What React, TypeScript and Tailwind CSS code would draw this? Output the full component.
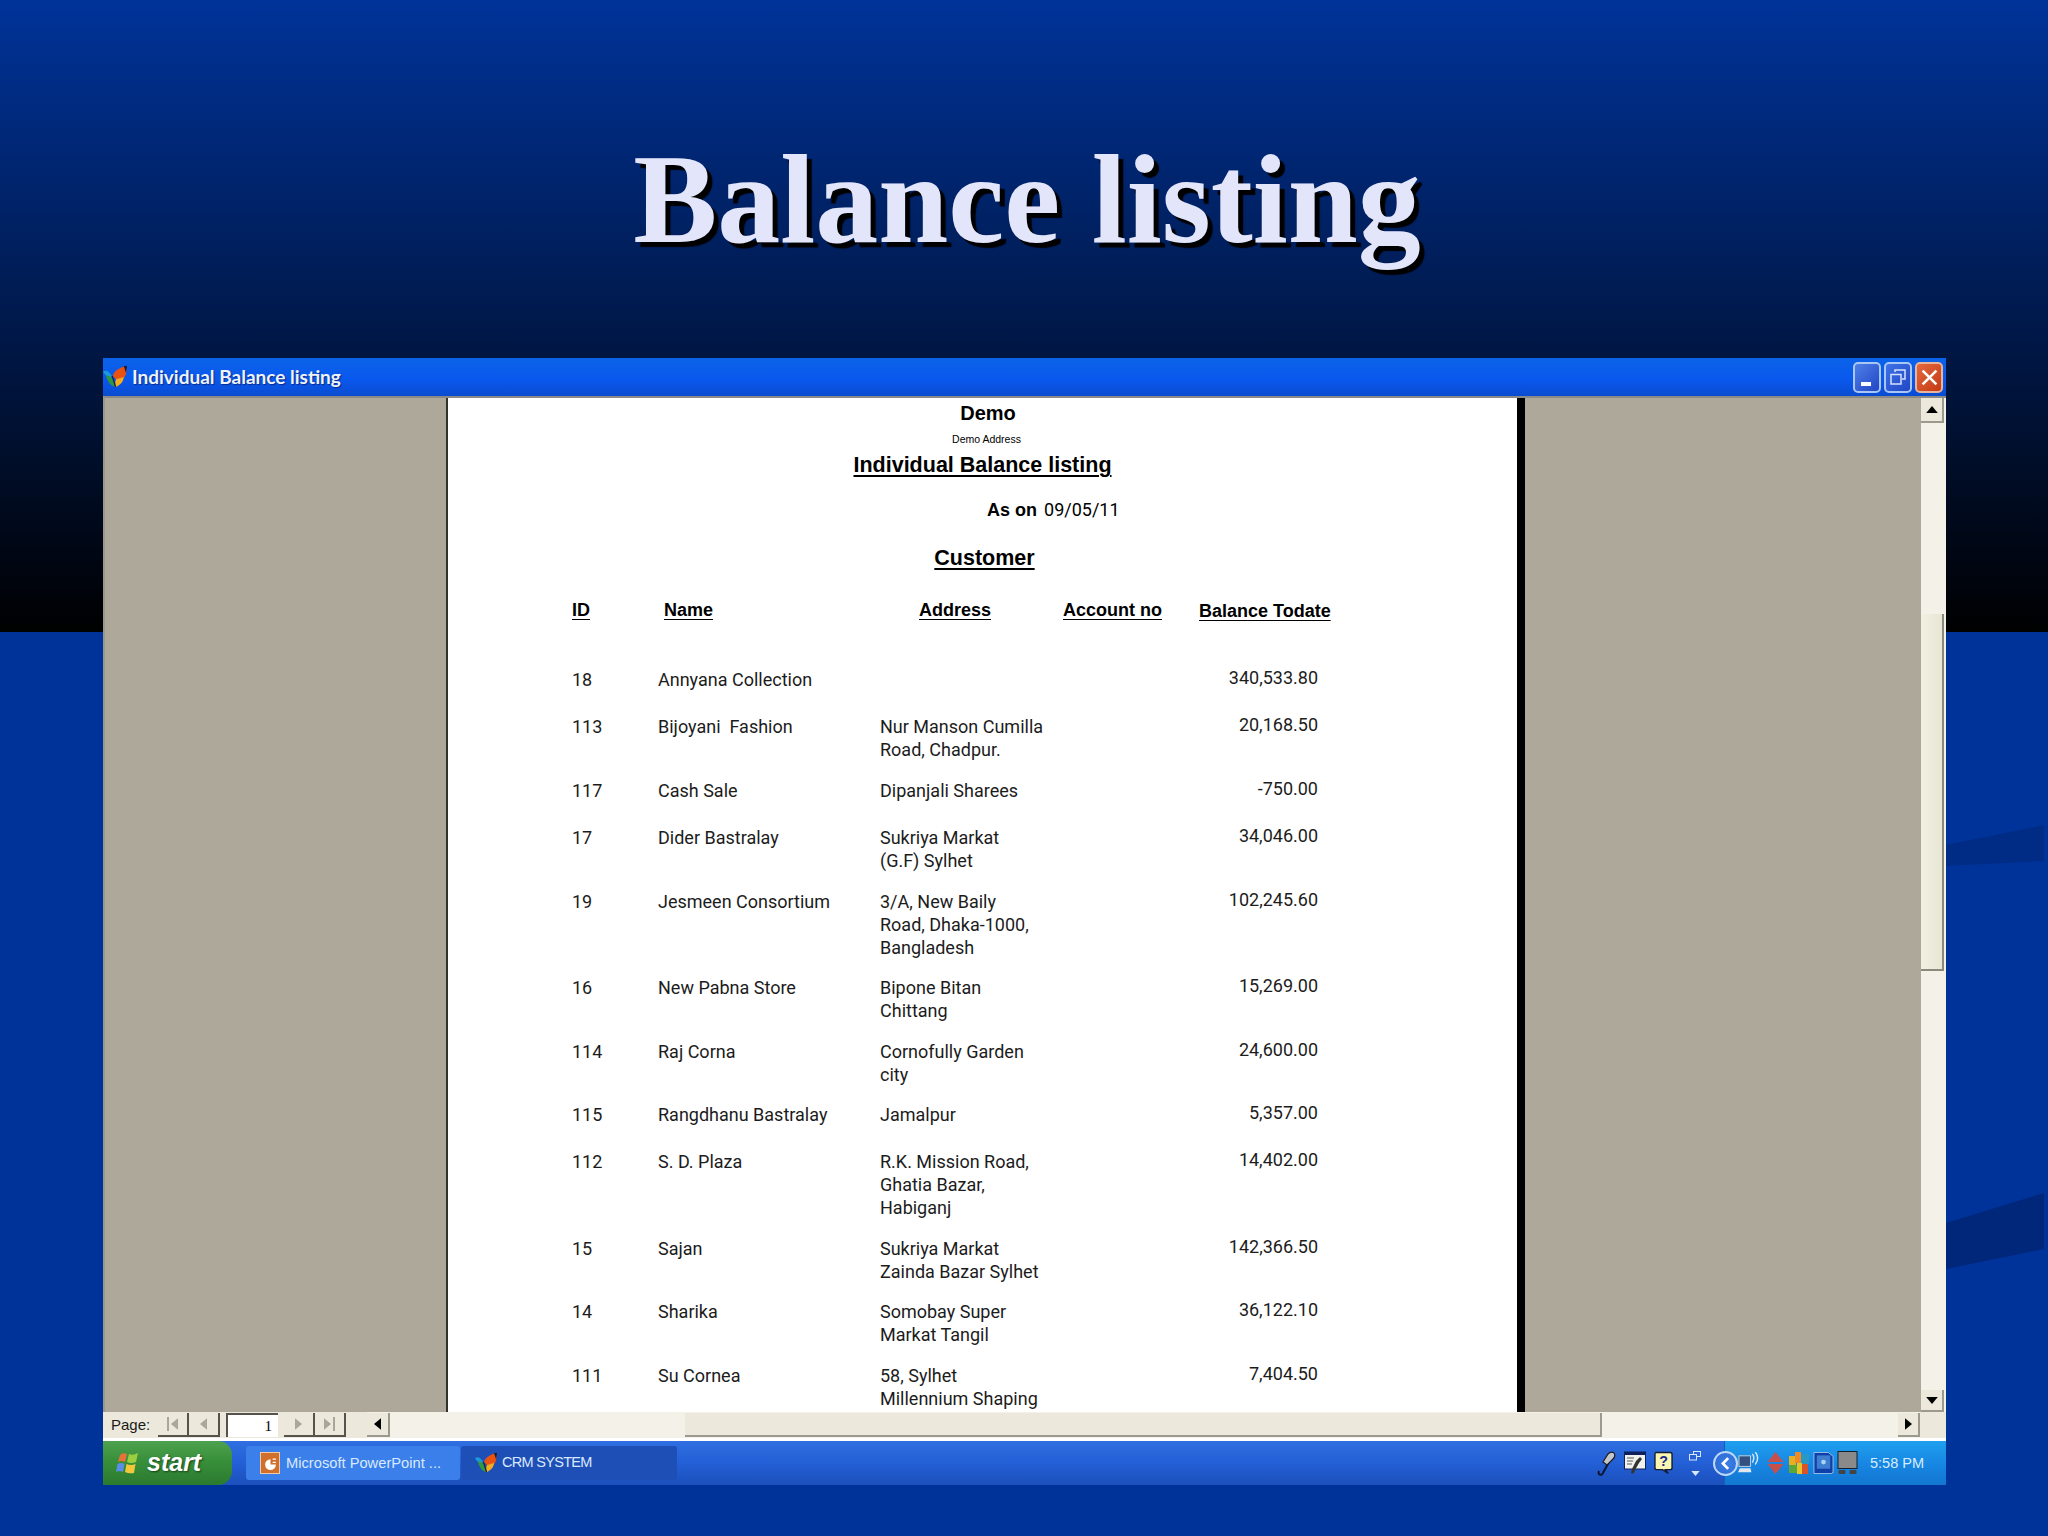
import React from "react";

function Butterfly({ className }: { className: string }) {
  return (
    <svg viewBox="0 0 22 20" className={className}>
      <path d="M0 5 C3 3 6 5 8 9 L6 11 C4 9 1 8 0 5Z" fill="#1a9ad8" />
      <path d="M3 9 C6 8 8 10 9 13 L11 19 C7 18 4 14 3 9Z" fill="#2f9a3a" />
      <path d="M9 9 C10 5 14 2 21 0 C22 5 21 9 19 11 L12 12Z" fill="#ea5212" />
      <path d="M12 12 L19 10 C19 14 16 17 12 19 C11 16 11 14 12 12Z" fill="#f6ad1c" />
      <path d="M9 9 L12 19 L11 19 L8 9Z M19 0 L22 0 L21 6Z" fill="#1a1a2a" />
    </svg>
  );
}

function WinFlag() {
  return (
    <svg viewBox="0 0 24 26" className="w-[24px] h-[26px]">
      <path d="M5 5 Q8 2 12 4 L10 12 Q6 10 3 12Z" fill="#e8713a" />
      <path d="M14 4 Q18 6 23 3 L21 12 Q16 14 12 12Z" fill="#9ccf3f" />
      <path d="M2.5 14 Q6 12 9.500 14 L8 22 Q4 20 1 22Z" fill="#5a8ee8" />
      <path d="M11.500 14 Q16 16 20.500 14 L19 23 Q14 24 10 22Z" fill="#f2c83a" />
    </svg>
  );
}

function Arrow({ dir, color = "#000" }: { dir: "up" | "down" | "left" | "right"; color?: string }) {
  const d = {
    up: "M0 6 L5 0 L10 6Z",
    down: "M0 0 L10 0 L5 6Z",
    left: "M6 0 L6 10 L0 5Z",
    right: "M0 0 L6 5 L0 10Z",
  }[dir];
  const vertical = dir === "up" || dir === "down";
  return (
    <svg viewBox={vertical ? "0 0 10 6" : "0 0 6 10"} className={vertical ? "w-[12px] h-[7px]" : "w-[7px] h-[12px]"}>
      <path d={d} fill={color} />
    </svg>
  );
}

function NavButton({ dir, bar }: { dir: "left" | "right"; bar?: boolean }) {
  return (
    <div className="w-[31px] h-[24px] flex items-center justify-center gap-[2px] border-r-2 border-b-2 border-[#55534c]">
      {bar && dir === "left" && <div className="w-[2px] h-[14px] bg-[#a9a79b]" />}
      <Arrow dir={dir} color="#a9a79b" />
      {bar && dir === "right" && <div className="w-[2px] h-[14px] bg-[#a9a79b]" />}
    </div>
  );
}

function ScrollBtn({ children, className = "" }: { children: React.ReactNode; className?: string }) {
  return (
    <div className={`flex items-center justify-center bg-[#ece9dc] border-r-2 border-b-2 border-[#9c9a8e] ${className}`}>
      {children}
    </div>
  );
}

const rows: { id: string; name: string; addr: string[]; bal: string; h: string }[] = [
  { id: "18", name: "Annyana Collection", addr: [], bal: "340,533.80", h: "h-[47px]" },
  { id: "113", name: "Bijoyani  Fashion", addr: ["Nur Manson Cumilla", "Road, Chadpur."], bal: "20,168.50", h: "h-[64px]" },
  { id: "117", name: "Cash Sale", addr: ["Dipanjali Sharees"], bal: "-750.00", h: "h-[47px]" },
  { id: "17", name: "Dider Bastralay", addr: ["Sukriya Markat", "(G.F) Sylhet"], bal: "34,046.00", h: "h-[64px]" },
  { id: "19", name: "Jesmeen Consortium", addr: ["3/A, New Baily", "Road, Dhaka-1000,", "Bangladesh"], bal: "102,245.60", h: "h-[86px]" },
  { id: "16", name: "New Pabna Store", addr: ["Bipone Bitan", "Chittang"], bal: "15,269.00", h: "h-[64px]" },
  { id: "114", name: "Raj Corna", addr: ["Cornofully Garden", "city"], bal: "24,600.00", h: "h-[63px]" },
  { id: "115", name: "Rangdhanu Bastralay", addr: ["Jamalpur"], bal: "5,357.00", h: "h-[47px]" },
  { id: "112", name: "S. D. Plaza", addr: ["R.K. Mission Road,", "Ghatia Bazar,", "Habiganj"], bal: "14,402.00", h: "h-[87px]" },
  { id: "15", name: "Sajan", addr: ["Sukriya Markat", "Zainda Bazar Sylhet"], bal: "142,366.50", h: "h-[63px]" },
  { id: "14", name: "Sharika", addr: ["Somobay Super", "Markat Tangil"], bal: "36,122.10", h: "h-[64px]" },
  { id: "111", name: "Su Cornea", addr: ["58, Sylhet", "Millennium Shaping"], bal: "7,404.50", h: "h-[64px]" },
];

function Report() {
  return (
    <div className="w-[1079px] shrink-0 flex border-l-2 border-[#33312c] h-full">
      <div className="w-[1069px] bg-white text-black overflow-hidden font-['Liberation_Sans',Arial,sans-serif]">
        <div className="relative pt-[3px]">
          <div className="h-[24px] leading-[24px] text-[20px] font-bold text-center pl-[11px]">Demo</div>
          <div className="mt-[7px] h-[14px] leading-[14px] text-[10.5px] text-center pl-[8px]">Demo Address</div>
          <div className="mt-[5px] h-[28px] leading-[28px] text-center">
            <span className="text-[21.500px] font-semibold underline decoration-2 underline-offset-[3px]">Individual Balance listing</span>
          </div>
          <div className="mt-[20px] h-[22px] leading-[22px] text-[18px] pl-[539px]">
            <b>As on</b> <span className="ml-[2px] font-['Roboto',sans-serif]">09/05/11</span>
          </div>
          <div className="mt-[23px] h-[28px] leading-[28px] text-center pl-[4px]">
            <span className="text-[21.500px] font-semibold underline decoration-2 underline-offset-[3px]">Customer</span>
          </div>
          <div className="mt-[27px] h-[22px] leading-[22px] text-[18px] font-bold underline underline-offset-[3px] grid grid-cols-[93px_254px_145px_135px_1fr] pl-[124px]">
            <div>ID</div>
            <div className="ml-[-1px]">Name</div>
            <div>Address</div>
            <div className="ml-[-1px]">Account no</div>
            <div className="mt-[1px] whitespace-nowrap">Balance Todate</div>
          </div>
          <div className="mt-[47px] text-[18px] leading-[23px] text-[#1c1c1c] font-['Roboto',sans-serif]">
            {rows.map((r) => (
              <div key={r.id} className={`grid grid-cols-[86px_222px_438px] pl-[124px] ${r.h}`}>
                <div>{r.id}</div>
                <div className="whitespace-pre">{r.name}</div>
                <div className="relative">
                  {r.addr.map((a) => (
                    <div key={a} className="whitespace-nowrap">{a}</div>
                  ))}
                  <div className="absolute right-0 top-[-2px]">{r.bal}</div>
                </div>
              </div>
            ))}
          </div>
        </div>
      </div>
      <div className="w-[8px] bg-black" />
    </div>
  );
}

function Tray() {
  return (
    <div className="flex items-center h-full">
      <div className="flex items-center gap-[8px] pr-[23px]">
        {/* microphone */}
        <svg viewBox="0 0 20 26" className="w-[20px] h-[26px]">
          <path d="M3 21 C1 25 6 26 7 23 L13 12" stroke="#0d1730" strokeWidth="2" fill="none" />
          <path d="M7 12 L12 4 Q15 1 18 3 Q20 6 17 9 L11 15Z" fill="#c3c7c9" stroke="#1d1d24" strokeWidth="1.200" />
        </svg>
        {/* dictation window */}
        <svg viewBox="0 0 22 24" className="w-[22px] h-[24px]">
          <rect x="0.500" y="1" width="21" height="17" fill="#f1f2ee" stroke="#10205c" />
          <rect x="0.500" y="1" width="21" height="3" fill="#10205c" />
          <path d="M3 7H10M3 10H9M3 13H8" stroke="#5a5a5a" />
          <path d="M7 22 Q10 24 11 19 L15 12 L18 8 L16 6 L12 10 L8 18Z" fill="#333" />
        </svg>
        {/* help */}
        <svg viewBox="0 0 20 24" className="w-[19px] h-[24px]">
          <path d="M2 1 H17 Q19 1 19 3 V17 Q19 19 17 19 H12 L15 23 L9 19 H3 Q1 19 1 17 V3 Q1 1 2 1Z" fill="#fbf5b2" stroke="#141c33" strokeWidth="1.500" />
          <text x="10" y="15" textAnchor="middle" fontSize="15" fontWeight="700" fill="#1a2a8a" fontFamily="Liberation Sans">?</text>
        </svg>
        <div className="flex flex-col items-center gap-[10px] ml-[8px] w-[12px]">
          <svg viewBox="0 0 12 10" className="w-[12px] h-[10px]">
            <rect x="4.500" y="0.500" width="7" height="5" fill="none" stroke="#d7e6fb" />
            <rect x="0.500" y="3.500" width="7" height="5.500" fill="#2a62d6" stroke="#d7e6fb" />
          </svg>
          <svg viewBox="0 0 10 6" className="w-[9px] h-[5px]"><path d="M0 0 L10 0 L5 6Z" fill="#d7e6fb" /></svg>
        </div>
      </div>
      <div className="relative h-full w-[222px] bg-[linear-gradient(#1fa0ee,#1785e2_55%,#1277d0)] border-l border-[#0f62ad] flex items-center pl-[13px]">
        <div className="absolute left-[-12px] top-[10px] w-[25px] h-[25px] rounded-full bg-[radial-gradient(circle_at_60%_50%,#3a80e4,#2a66d6)] border-2 border-[#bcd8f6] flex items-center justify-center">
          <svg viewBox="0 0 10 14" className="w-[9px] h-[13px]">
            <path d="M8 1 L2 7 L8 13" stroke="#fff" strokeWidth="3" fill="none" />
          </svg>
        </div>
        {/* network */}
        <svg viewBox="0 0 24 24" className="w-[23px] h-[23px] shrink-0">
          <rect x="1" y="4" width="12" height="11" fill="#33507e" stroke="#c3d3e6" />
          <path d="M0 21 H14 L13 17 H2Z" fill="#dfe6ee" />
          <path d="M15 2 Q18 6 15 11 M18 0 Q23 6 18 13" stroke="#cfe7fb" strokeWidth="1.500" fill="none" />
        </svg>
        {/* red arrows */}
        <svg viewBox="0 0 16 22" className="w-[19px] h-[22px] ml-[5px] shrink-0">
          <path d="M8 0 L16 10 H0Z" fill="#c8504a" />
          <path d="M0 12 H16 L8 22Z" fill="#c8504a" />
        </svg>
        {/* avg */}
        <svg viewBox="0 0 20 22" className="w-[20px] h-[22px] ml-[4px] shrink-0">
          <rect x="0" y="4" width="7" height="9" fill="#e6b020" />
          <rect x="6" y="0" width="6" height="11" fill="#f08a24" />
          <rect x="12" y="2" width="8" height="10" fill="#2a98c4" />
          <rect x="0" y="13" width="8" height="8" fill="#5da63a" />
          <rect x="8" y="11" width="5" height="11" fill="#e8c62a" />
          <rect x="13" y="12" width="6" height="10" fill="#d8532a" />
        </svg>
        {/* blue box */}
        <svg viewBox="0 0 22 22" className="w-[21px] h-[22px] ml-[4px] shrink-0">
          <path d="M1 0 H16 L21 4 V20 Q21 22 19 22 H1Z" fill="#0f3fa8" stroke="#b9d6f2" strokeWidth="0.800" />
          <rect x="4" y="3" width="14" height="14" fill="#3d7ed0" />
          <circle cx="11" cy="10" r="2.500" fill="#a9d2f4" />
        </svg>
        {/* gray screen */}
        <svg viewBox="0 0 20 24" className="w-[21px] h-[24px] ml-[3px] shrink-0">
          <rect x="0.500" y="0.500" width="19" height="17" fill="#8a8a8a" stroke="#123" />
          <rect x="1" y="19" width="7" height="4" rx="1" fill="#444" />
          <rect x="12" y="19" width="7" height="4" rx="1" fill="#444" />
        </svg>
        <div className="ml-[12px] text-[14.500px] leading-none text-[#d7edfd] font-['Liberation_Sans',Arial,sans-serif] whitespace-nowrap">5:58 PM</div>
      </div>
    </div>
  );
}

export default function App() {
  return (
    <div className="relative w-[2048px] h-[1536px] overflow-hidden bg-[linear-gradient(#003399_0px,#000000_632px,#003399_632px,#003399_1536px)]">
      {/* decorative stripes of the slide background */}
      <svg className="absolute right-0 top-0 w-[2048px] h-[1536px]" viewBox="0 0 2048 1536">
        <path d="M1946 845 L2044 825 V861 L1946 866Z" fill="#002c85" />
        <path d="M1946 1223 L2044 1193 V1249 L1946 1269Z" fill="#002779" />
      </svg>

      <div className="relative flex flex-col">
        <div className="h-[358px] flex justify-center pt-[138px]">
          <h1 className="h-[124px] leading-[124px] ml-[6px] text-[126px] font-bold text-[#e3e6fb] font-['Liberation_Serif','Times_New_Roman',serif] [text-shadow:5px_5px_1px_#000] whitespace-nowrap">
            Balance listing
          </h1>
        </div>

        <div className="ml-[103px] w-[1843px] flex flex-col">
          {/* title bar */}
          <div className="h-[38px] flex items-center justify-between pr-[3px] bg-[linear-gradient(#0b63e8,#0a58ee_55%,#0a4cd0)]">
            <div className="flex items-center">
              <Butterfly className="w-[24px] h-[22px]" />
              <span className="ml-[5px] text-[19px] font-bold text-[#eef3fb] font-['Lato',sans-serif] [text-shadow:1px_1px_1px_#0a2a8a] whitespace-nowrap">
                Individual Balance listing
              </span>
            </div>
            <div className="flex gap-[3px] items-center">
              <div className="w-[28px] h-[31px] rounded-[5px] border-2 border-[#a9c6f4] bg-[linear-gradient(135deg,#4f7fe8,#2146c4)] flex items-end pb-[5px] pl-[6px]">
                <div className="w-[10px] h-[4px] bg-white" />
              </div>
              <div className="w-[28px] h-[31px] rounded-[5px] border-2 border-[#a9c6f4] bg-[linear-gradient(135deg,#3f72e6,#2146c4)] flex items-center justify-center">
                <svg viewBox="0 0 16 16" className="w-[16px] h-[16px]">
                  <path d="M5 3 V1 H15 V10 H12" stroke="#d5e2fa" strokeWidth="1.500" fill="none" />
                  <rect x="1" y="5.500" width="10" height="9.500" stroke="#d5e2fa" strokeWidth="1.500" fill="none" />
                </svg>
              </div>
              <div className="w-[28px] h-[31px] rounded-[5px] border-2 border-[#e8b49c] bg-[linear-gradient(135deg,#e4683f,#c53a12)] flex items-center justify-center">
                <svg viewBox="0 0 16 16" className="w-[17px] h-[17px]">
                  <path d="M1.500 1.500 L14.500 14.500 M14.500 1.500 L1.500 14.500" stroke="#fff" strokeWidth="2.400" />
                </svg>
              </div>
            </div>
          </div>

          {/* client area */}
          <div className="h-[1016px] border-t-2 border-[#8b8a86] border-l-2 border-l-[#9a988c] bg-[#aea89a] flex overflow-hidden">
            <div className="w-[341px] shrink-0" />
            <Report />
            <div className="flex-1" />
            <div className="w-[25px] shrink-0 bg-[#f3f1e8] flex flex-col pr-[2px]">
              <ScrollBtn className="h-[25px]"><Arrow dir="up" /></ScrollBtn>
              <div className="h-[191px]" />
              <div className="h-[357px] bg-[linear-gradient(90deg,#f2f0e2,#e8e6d4)] border-r-2 border-b-2 border-[#8b897d]" />
              <div className="flex-1" />
              <ScrollBtn className="h-[22px]"><Arrow dir="down" /></ScrollBtn>
            </div>
          </div>

          {/* bottom toolbar and horizontal bar */}
          <div className="h-[29px] bg-[#f3f1e8] flex items-center border-b-[3px] border-white">
            <div className="h-full flex items-center bg-[#ece9dc] pl-[8px] pr-[21px]">
              <span className="w-[47px] text-[15px] text-[#1a1a1a] font-['Liberation_Sans',Arial,sans-serif]">Page:</span>
              <NavButton dir="left" bar />
              <NavButton dir="left" />
              <div className="ml-[6px] mr-[6px] w-[52px] h-[24px] bg-white border-l-2 border-t-2 border-[#55534c] text-right pr-[6px] text-[15px] leading-[23px] text-black font-['Liberation_Serif',serif]">1</div>
              <NavButton dir="right" />
              <NavButton dir="right" bar />
            </div>
            <ScrollBtn className="w-[23px] h-[24px]"><Arrow dir="left" /></ScrollBtn>
            <div className="w-[295px]" />
            <div className="w-[917px] h-[24px] bg-[#ece9dc] border-r-2 border-b-2 border-[#9c9a8e]" />
            <div className="flex-1" />
            <ScrollBtn className="w-[22px] h-[24px]"><Arrow dir="right" /></ScrollBtn>
            <div className="w-[26px] h-full bg-[#ece9dc]" />
          </div>

          {/* taskbar */}
          <div className="h-[44px] flex items-center justify-between bg-[linear-gradient(#2f6fe0,#235fd6_50%,#1c50bc)]">
            <div className="flex items-center h-full">
              <div className="w-[129px] h-full flex items-center pl-[12px] gap-[8px] rounded-r-[14px] bg-[linear-gradient(#4ea24f,#388f3a_45%,#2b7a2e)]">
                <WinFlag />
                <span className="text-[25px] font-bold italic text-white font-['Liberation_Sans',Arial,sans-serif] [text-shadow:1px_1px_2px_#14401a]">start</span>
              </div>
              <div className="ml-[14px] w-[214px] h-[34px] rounded-[3px] bg-[#3a7fea] flex items-center pl-[14px] gap-[6px]">
                <div className="w-[20px] h-[22px] bg-[#d0702c] border border-[#f2c9a6] flex items-center justify-center">
                  <svg viewBox="0 0 12 12" className="w-[13px] h-[13px]">
                    <path d="M8 2 H11 M8 5 H11" stroke="#fff" strokeWidth="1.200" />
                    <path d="M6 2 A5 5 0 1 0 11 7 H6Z" fill="#fff" />
                  </svg>
                </div>
                <span className="text-[14.700px] text-[#d9e9fd] font-['Liberation_Sans',Arial,sans-serif] whitespace-nowrap">Microsoft PowerPoint ...</span>
              </div>
              <div className="ml-[1px] w-[216px] h-[34px] rounded-[3px] bg-[#1e4fb6] flex items-center pl-[14px] gap-[5px]">
                <Butterfly className="w-[22px] h-[22px]" />
                <span className="text-[14.500px] tracking-[-0.7px] text-[#d9e9fd] font-['Liberation_Sans',Arial,sans-serif] whitespace-nowrap">CRM SYSTEM</span>
              </div>
            </div>
            <Tray />
          </div>
        </div>
      </div>
    </div>
  );
}
